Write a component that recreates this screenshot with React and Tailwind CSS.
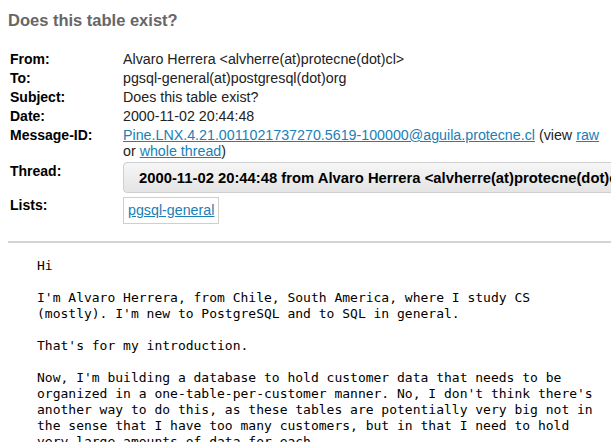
import React from 'react'

const link = 'text-[#1a80b6] underline'

const Row = ({ label, children, className = '' }) => (
  <>
    <div className={`font-bold text-black text-[14px] ${className}`}>{label}</div>
    <div className={className}>{children}</div>
  </>
)

const body = `Hi

I'm Alvaro Herrera, from Chile, South America, where I study CS
(mostly). I'm new to PostgreSQL and to SQL in general.

That's for my introduction.

Now, I'm building a database to hold customer data that needs to be
organized in a one-table-per-customer manner. No, I don't think there's
another way to do this, as these tables are potentially very big not in
the sense that I have too many customers, but in that I need to hold
very large amounts of data for each`

export default function App() {
  return (
    <div className="w-[611px] h-[442px] overflow-hidden bg-white font-['Liberation_Sans',Arial,sans-serif] text-[14.25px] text-[#222]">
      <h1 className="pl-[8px] pt-[10px] text-[16.5px] leading-[20px] font-bold text-[#666]">
        Does this table exist?
      </h1>

      <div className="mt-[21px] ml-[10px] grid grid-cols-[113px_1fr] gap-y-[3px] leading-[16px]">
        <Row label="From:">Alvaro Herrera &lt;alvherre(at)protecne(dot)cl&gt;</Row>
        <Row label="To:">pgsql-general(at)postgresql(dot)org</Row>
        <Row label="Subject:">Does this table exist?</Row>
        <Row label="Date:">2000-11-02 20:44:48</Row>
        <Row label="Message-ID:">
          <a className={link}>Pine.LNX.4.21.0011021737270.5619-100000@aguila.protecne.cl</a> (view{' '}
          <a className={link}>raw</a>
          <br />
          or <a className={link}>whole thread</a>)
        </Row>
        <Row label="Thread:" className="pt-[1px]">
          <div className="relative mr-[6px] h-[31px] mt-[-1px] rounded-[4px] border border-[#cfcfcf] bg-gradient-to-b from-[#f6f6f6] to-[#e4e4e4] overflow-hidden">
            <div className="whitespace-nowrap pl-[15px] pt-[7px] font-bold text-[14.8px] leading-[16px] text-black">
              2000-11-02 20:44:48 from Alvaro Herrera &lt;alvherre(at)protecne(dot)cl&gt;
            </div>
            <span className="absolute right-[12px] top-[13px] w-[5px] h-[5px] rounded-full bg-[#777]" />
          </div>
        </Row>
        <Row label="Lists:" className="pt-[1px]">
          <span className="inline-block border border-[#cfcfcf] px-[4px] pt-[4px] pb-[5px]">
            <a className={link}>pgsql-general</a>
          </span>
        </Row>
      </div>

      <div className="mt-[17px] ml-[8px] h-[2px] bg-[#d3d3d3]" />

      <pre className="mt-[15px] pl-[37px] font-['DejaVu_Sans_Mono',monospace] text-[13px] leading-[16px] text-black">
        {body}
      </pre>
    </div>
  )
}
